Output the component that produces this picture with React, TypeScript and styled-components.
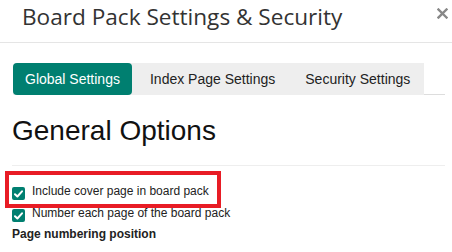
import React from 'react';
import styled, { createGlobalStyle } from 'styled-components';

const GlobalStyle = createGlobalStyle`
  body {
    margin: 0;
    background: #fff;
    font-family: "Liberation Sans", Arial, sans-serif;
  }
`;

const Modal = styled.div`
  width: 452px;
  height: 252px;
  overflow: hidden;
  background: #fff;
`;

const Header = styled.header`
  display: flex;
  justify-content: space-between;
  align-items: flex-start;
  height: 43px;
  box-sizing: border-box;
  padding: 5px 4px 0 22px;
  border-bottom: 1px solid #e5e5e5;
`;

const Title = styled.h4`
  margin: 0;
  font-family: "Open Sans", sans-serif;
  font-size: 22.6px;
  font-weight: 400;
  line-height: 23px;
  color: #333;
`;

const CloseButton = styled.button`
  display: flex;
  border: none;
  background: none;
  padding: 0;
  margin-top: 3px;
  cursor: pointer;
`;

const Body = styled.div`
  padding: 20px 7px 0 12px;
`;

const Nav = styled.nav`
  display: flex;
  align-items: flex-start;
  height: 31px;
  margin-left: 1px;
  border-bottom: 1px solid #ddd;
`;

const TabList = styled.div`
  display: flex;
  background: #eee;
  border-radius: 4px 0 0 0;
`;

const Tab = styled.button<{ $active?: boolean }>`
  border: none;
  font-family: "Liberation Sans", Arial, sans-serif;
  font-size: 14px;
  line-height: 20px;
  cursor: pointer;
  color: ${p => (p.$active ? '#fff' : '#222')};
  background: ${p => (p.$active ? '#007f70' : 'transparent')};
  border-radius: ${p => (p.$active ? '4px' : '0')};
  padding: ${p => (p.$active ? '6px 12px' : '6px 15px 5px')};
  margin-right: ${p => (p.$active ? '3px' : '0')};
  height: ${p => (p.$active ? '32px' : '31px')};
  &:last-child {
    padding-right: 14px;
  }
`;

const SectionTitle = styled.h2`
  margin: 21px 0 0;
  font-size: 28px;
  font-weight: 400;
  line-height: 30px;
  color: #111;
`;

const Rule = styled.hr`
  border: none;
  border-top: 1px solid #eee;
  margin: 19px 0 14px;
`;

const OptionRow = styled.label<{ $highlighted?: boolean }>`
  position: relative;
  display: flex;
  align-items: flex-start;
  gap: 7px;
  height: 22px;
  font-size: 12px;
  line-height: 22px;
  color: #222;
  cursor: pointer;

  ${p =>
    p.$highlighted &&
    `
    &::after {
      content: '';
      position: absolute;
      left: -7px;
      top: -9px;
      width: 216px;
      height: 37px;
      box-sizing: border-box;
      border: 4px solid #e81c25;
      pointer-events: none;
    }
  `}
`;

const Check = styled.span`
  display: flex;
  align-items: center;
  justify-content: center;
  flex: none;
  width: 13px;
  height: 13px;
  margin-top: 7px;
  border-radius: 2px;
  background: #007f70;
`;

const FieldLabel = styled.div`
  font-size: 12px;
  font-weight: 700;
  line-height: 20px;
  color: #222;
`;

const CheckMark = () => (
  <svg width="9" height="8" viewBox="0 0 9 8">
    <path d="M1 4.2 L3.4 6.5 L8 1.3" fill="none" stroke="#fff" strokeWidth="2" strokeLinecap="round" strokeLinejoin="round" />
  </svg>
);

const CloseIcon = () => (
  <svg width="11" height="11" viewBox="0 0 11 11">
    <path d="M1.5 1.5 L9.5 9.5 M9.5 1.5 L1.5 9.5" stroke="#888" strokeWidth="2.4" strokeLinecap="square" />
  </svg>
);

const App: React.FC = () => (
  <>
    <GlobalStyle />
    <Modal>
      <Header>
        <Title>Board Pack Settings &amp; Security</Title>
        <CloseButton aria-label="Close">
          <CloseIcon />
        </CloseButton>
      </Header>
      <Body>
        <Nav>
          <TabList>
            <Tab $active>Global Settings</Tab>
            <Tab>Index Page Settings</Tab>
            <Tab>Security Settings</Tab>
          </TabList>
        </Nav>
        <SectionTitle>General Options</SectionTitle>
        <Rule />
        <OptionRow $highlighted>
          <Check><CheckMark /></Check>
          Include cover page in board pack
        </OptionRow>
        <OptionRow>
          <Check><CheckMark /></Check>
          Number each page of the board pack
        </OptionRow>
        <FieldLabel>Page numbering position</FieldLabel>
      </Body>
    </Modal>
  </>
);

export default App;
